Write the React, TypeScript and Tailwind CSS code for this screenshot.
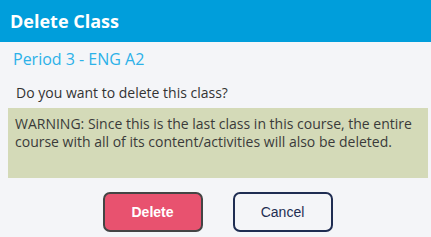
import React from "react";

const App: React.FC = () => {
  return (
    <div className="w-[431px] h-[237px] bg-[#f4f5f8] flex flex-col font-['Open_Sans',sans-serif]">
      {/* Header */}
      <div className="h-[42px] bg-[#009edb] flex items-center px-[10px]">
        <h1 className="text-white text-[18px] font-bold leading-none -mt-[1px]">Delete Class</h1>
      </div>

      {/* Body */}
      <div className="flex flex-col">
        <h2 className="text-[#2cb1e8] text-[16px] leading-none mt-[9px] ml-[13px]">
          Period 3 - ENG A2
        </h2>
        <p className="text-[#333] text-[14px] leading-none mt-[19px] ml-[16px]">
          Do you want to delete this class?
        </p>
        <div className="mt-[8px] ml-[8px] w-[420px] h-[70px] bg-[#d4dab8] px-[7px] pt-[7px] text-[14px] leading-[18px] text-[#3a3a3a]">
          WARNING: Since this is the last class in this course, the entire course with all of its
          content/activities will also be deleted.
        </div>
      </div>

      {/* Buttons */}
      <div className="flex justify-center gap-[30px] mt-[14px] ml-[4px] font-['Liberation_Sans',Arial,sans-serif]">
        <button className="w-[100px] h-[40px] rounded-[7px] border-2 border-[#444] bg-[#e8526f] text-white text-[14px] font-bold">
          Delete
        </button>
        <button className="w-[100px] h-[40px] rounded-[7px] border-2 border-[#1f2d52] bg-[#f4f5f8] text-[#1f2d52] text-[14px]">
          Cancel
        </button>
      </div>
    </div>
  );
};

export default App;
